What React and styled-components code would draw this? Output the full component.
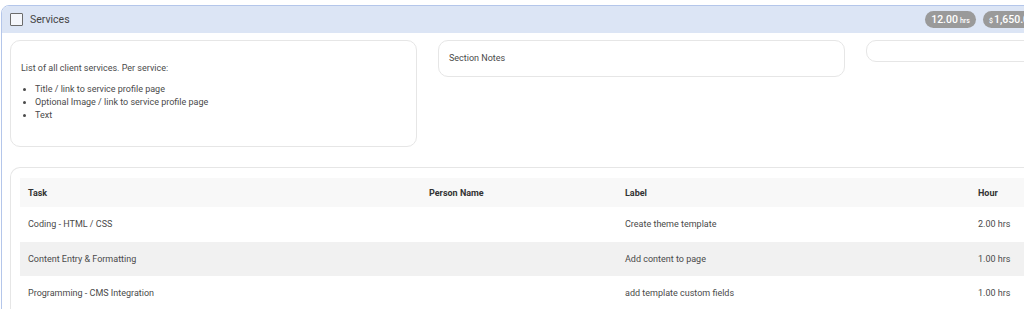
import styled, { createGlobalStyle } from 'styled-components'

const GlobalStyle = createGlobalStyle`
  html, body {
    margin: 0;
    padding: 0;
    background: #ffffff;
    overflow: hidden;
  }
  body {
    font-family: Roboto, "Liberation Sans", Arial, sans-serif;
    color: #444444;
  }
`

const Page = styled.div`
  padding: 5px 0 0 1px;
  width: 1024px;
  height: 309px;
  overflow: hidden;
  box-sizing: border-box;
`

const SectionCard = styled.section`
  width: 1300px;
  border: 1px solid #b4c6ea;
  border-radius: 8px 0 0 0;
  background: #ffffff;
`

const SectionHeader = styled.header`
  height: 27px;
  display: flex;
  align-items: center;
  padding: 0 8px 0 8px;
  background-color: #dce5f5;
  border-radius: 7px 0 0 0;
  box-sizing: border-box;
  width: 1022px;
`

const Checkbox = styled.span`
  width: 11px;
  height: 11px;
  border: 1px solid #6b6b6b;
  border-radius: 1px;
  background: #f4f6fb;
  margin-right: 7px;
  flex: none;
`

const Title = styled.span`
  font-size: 10.5px;
  color: #444444;
  flex: 1;
`

const Badges = styled.div`
  display: flex;
  gap: 7px;
  margin-right: -25px;
`

const Badge = styled.span`
  display: inline-flex;
  align-items: baseline;
  height: 17px;
  line-height: 17px;
  padding: 0 6px;
  border-radius: 9px;
  background: #9a9a9a;
  color: #ffffff;
  font-size: 10.5px;
  font-weight: 500;
  white-space: nowrap;
`

const Small = styled.small`
  font-size: 7px;
  margin: ${p => (p.$before ? '0 1px 0 0' : '0 0 0 2px')};
`

const Body = styled.div`
  padding: 7px 8px 0 8px;
`

const NotesRow = styled.div`
  display: flex;
  gap: 21px;
  align-items: flex-start;
`

const NoteBox = styled.div`
  width: 407px;
  min-height: ${p => p.$minHeight || 0}px;
  box-sizing: border-box;
  border: 1px solid #e6e6e6;
  border-radius: 10px;
  padding: ${p => p.$padding || '10px'};
  font-size: 9px;
  color: #4a4a4a;
  flex: none;
`

const NoteText = styled.p`
  margin: 12px 0 9px;
  line-height: 11px;
`

const NoteList = styled.ul`
  margin: 0;
  padding-left: 14px;
  line-height: 13px;
`

const TableCard = styled.div`
  margin-top: 20px;
  border: 1px solid #e6e6e6;
  border-bottom: none;
  border-radius: 10px 0 0 0;
  padding: 10px 10px 0 9px;
`

const Table = styled.table`
  border-collapse: collapse;
  table-layout: fixed;
  width: 1100px;
  font-size: 9px;
  color: #4a4a4a;
`

const HeadCell = styled.th`
  text-align: left;
  font-weight: 700;
  color: #333333;
  height: 29px;
  padding: 0 8px;
  background: #f8f8f8;
`

const Row = styled.tr`
  background: ${p => (p.$striped ? '#f1f1f1' : '#ffffff')};
`

const Cell = styled.td`
  height: 34.5px;
  padding: 0 8px;
  white-space: nowrap;
`

const rows = [
  { task: 'Coding - HTML / CSS', person: '', label: 'Create theme template', hour: '2.00 hrs' },
  { task: 'Content Entry & Formatting', person: '', label: 'Add content to page', hour: '1.00 hrs' },
  { task: 'Programming - CMS Integration', person: '', label: 'add template custom fields', hour: '1.00 hrs' }
]

function App () {
  return (
    <Page>
      <GlobalStyle />
      <SectionCard>
        <SectionHeader>
          <Checkbox />
          <Title>Services</Title>
          <Badges>
            <Badge>12.00<Small>hrs</Small></Badge>
            <Badge><Small $before>$</Small>1,650.00</Badge>
          </Badges>
        </SectionHeader>
        <Body>
          <NotesRow>
            <NoteBox $minHeight={107}>
              <NoteText>List of all client services. Per service:</NoteText>
              <NoteList>
                <li>Title / link to service profile page</li>
                <li>Optional Image / link to service profile page</li>
                <li>Text</li>
              </NoteList>
            </NoteBox>
            <NoteBox $minHeight={37} $padding="12px 10px">Section Notes</NoteBox>
            <NoteBox $minHeight={22} />
          </NotesRow>
          <TableCard>
            <Table>
              <colgroup>
                <col style={{ width: 401 }} />
                <col style={{ width: 196 }} />
                <col style={{ width: 353 }} />
                <col style={{ width: 150 }} />
              </colgroup>
              <thead>
                <tr>
                  <HeadCell>Task</HeadCell>
                  <HeadCell>Person Name</HeadCell>
                  <HeadCell>Label</HeadCell>
                  <HeadCell>Hour</HeadCell>
                </tr>
              </thead>
              <tbody>
                {rows.map((r, i) => (
                  <Row key={r.task} $striped={i % 2 === 1}>
                    <Cell>{r.task}</Cell>
                    <Cell>{r.person}</Cell>
                    <Cell>{r.label}</Cell>
                    <Cell>{r.hour}</Cell>
                  </Row>
                ))}
              </tbody>
            </Table>
          </TableCard>
        </Body>
      </SectionCard>
    </Page>
  )
}

export default App
